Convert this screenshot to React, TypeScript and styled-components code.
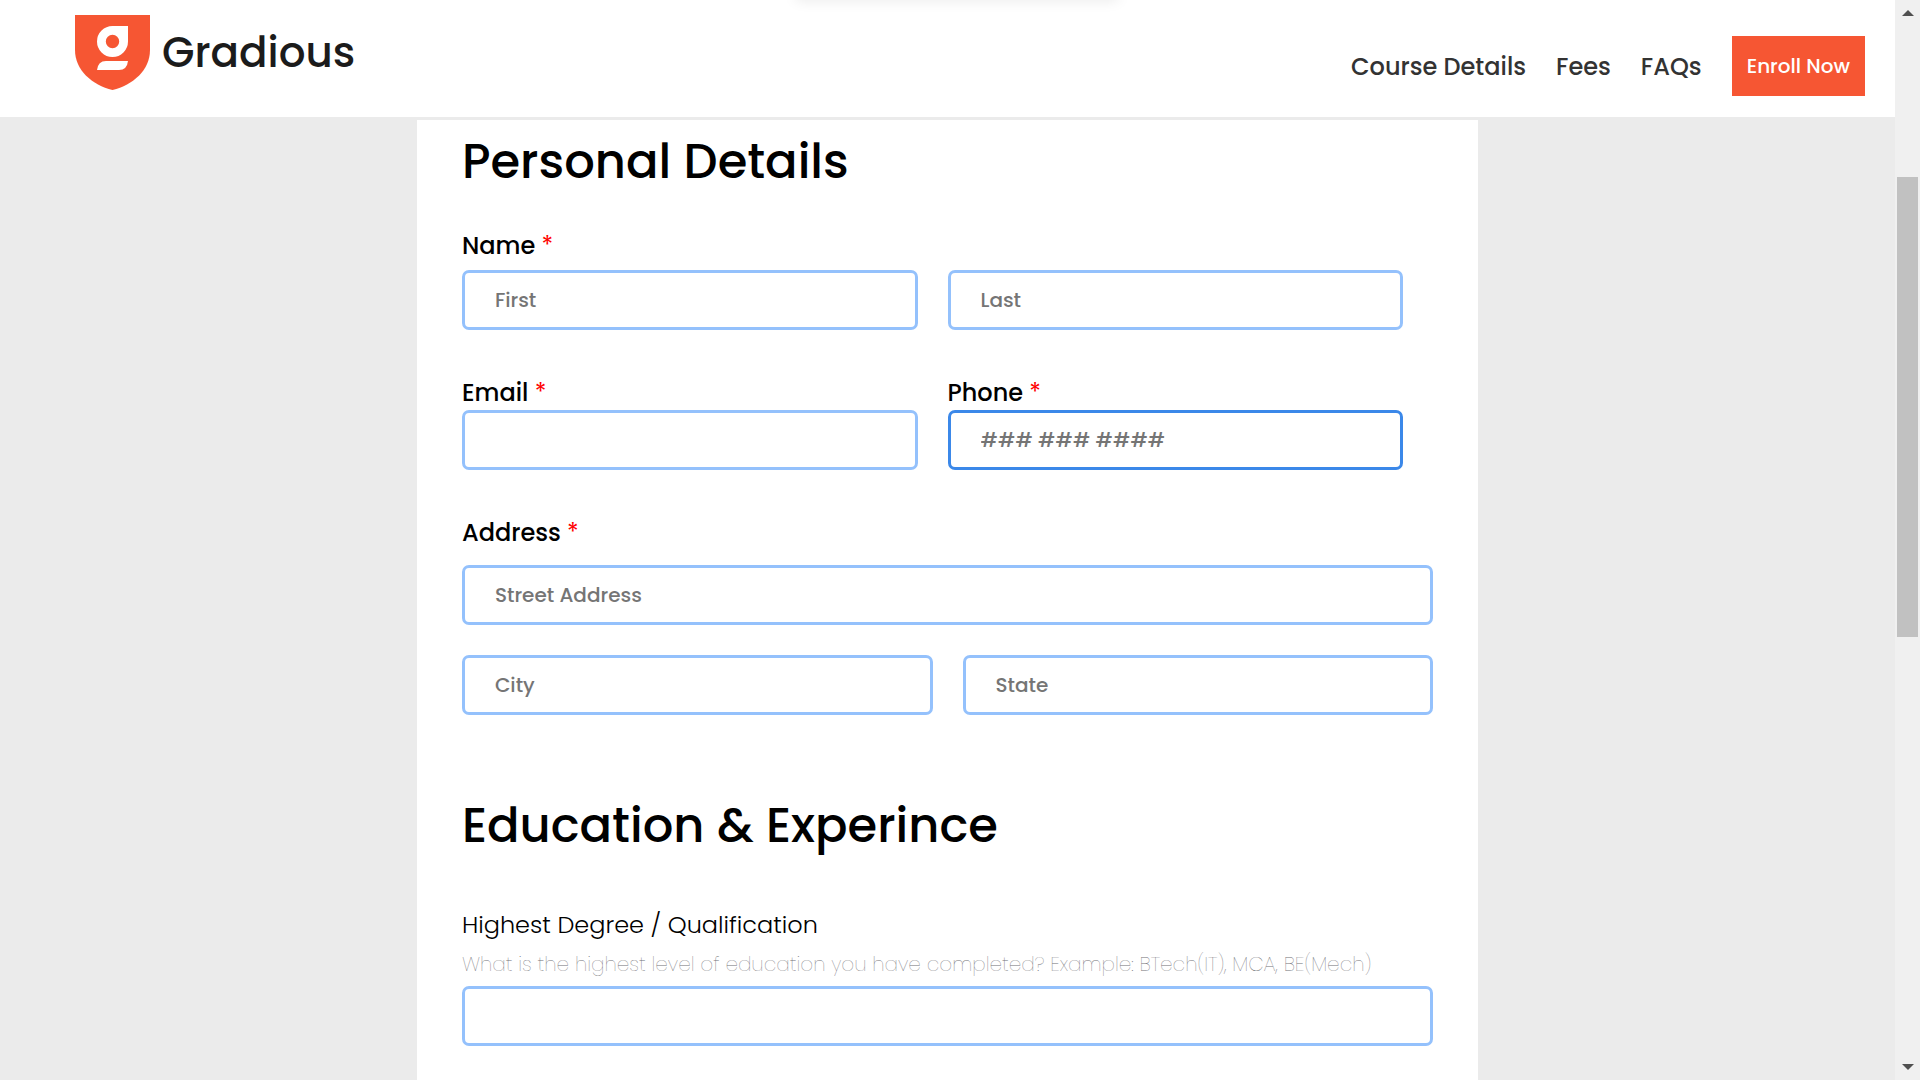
import React from "react";
import styled, { createGlobalStyle } from "styled-components";

const GlobalStyle = createGlobalStyle`
  *, *::before, *::after { box-sizing: border-box; }
  body {
    margin: 0;
    overflow: hidden;
    background: #ebebeb;
    color: #000;
    font-family: Poppins, Inter, "Liberation Sans", sans-serif;
  }
`;

const Window = styled.div`
  display: flex;
  height: 100vh;
  overflow: hidden;
`;

const Page = styled.div`
  flex: 1;
  min-width: 0;
  display: flex;
  flex-direction: column;
`;

const Header = styled.header`
  position: relative;
  flex: none;
  overflow: hidden;
  display: flex;
  align-items: flex-start;
  justify-content: space-between;
  padding: 15px 30px 21px 75px;
  background: #fff;

  &::before {
    content: "";
    position: absolute;
    top: -12px;
    left: 42%;
    width: 17%;
    height: 10px;
    box-shadow: 0 2px 14px rgba(0, 0, 0, 0.1);
  }
`;

const Brand = styled.a`
  display: flex;
  align-items: center;
  gap: 12px;
  color: #1b1b1b;
  font-size: 42px;
  font-weight: 500;
  line-height: 75px;
  text-decoration: none;
`;

const Nav = styled.nav`
  display: flex;
  align-items: center;
  gap: 30px;
  padding-top: 21px;
`;

const NavLink = styled.a`
  padding-top: 2px;
  color: #333;
  font-size: 24px;
  font-weight: 500;
  line-height: 36px;
  text-decoration: none;
`;

const EnrollButton = styled.button`
  height: 60px;
  padding: 0 15px;
  border: 0;
  background: #f65633;
  color: #fff;
  font: inherit;
  font-size: 20px;
  font-weight: 500;
`;

const Main = styled.main`
  flex: 1;
  min-height: 0;
  display: flex;
  justify-content: center;
  padding-top: 3px;
`;

const Form = styled.form`
  width: 56%;
  padding: 6px 45px 0;
  background: #fff;
`;

const Section = styled.section`
  & + & {
    margin-top: 75px;
  }
`;

const Heading = styled.h2<{ $gap: number }>`
  margin: 0 0 ${(p) => p.$gap}px;
  font-size: 48px;
  font-weight: 500;
  line-height: 72px;
`;

const Group = styled.fieldset<{ $gap?: number }>`
  display: flex;
  flex-direction: column;
  gap: ${(p) => p.$gap ?? 0}px;
  min-width: 0;
  margin: 0;
  padding: 0;
  border: 0;

  & + & {
    margin-top: 45px;
  }
`;

const Label = styled.label<{ $light?: boolean }>`
  font-size: 24px;
  font-weight: ${(p) => (p.$light ? 300 : 500)};
  line-height: 36px;
`;

const Required = styled.span`
  color: #f00;
  font-weight: 400;
`;

const Hint = styled.p`
  margin: 0;
  color: #707075;
  font-size: 20px;
  font-weight: 200;
  line-height: 31px;
`;

const Columns = styled.div<{ $inset?: boolean }>`
  display: grid;
  grid-template-columns: 1fr 1fr;
  gap: 30px;
  padding-right: ${(p) => (p.$inset ? 30 : 0)}px;
`;

const Stack = styled.div`
  display: grid;
  gap: 30px;
`;

const Field = styled.div`
  display: flex;
  flex-direction: column;

  label {
    height: 35px;
  }
`;

const Input = styled.input<{ $active?: boolean }>`
  width: 100%;
  height: 60px;
  padding: 0 30px;
  border: 3px solid ${(p) => (p.$active ? "#3b88e9" : "#94c1fc")};
  border-radius: 7px;
  outline: 0;
  background: #fff;
  color: #000;
  font: inherit;
  font-size: 20px;
  font-weight: 500;

  &::placeholder {
    color: #757575;
    opacity: 1;
  }
`;

const ScrollBar = styled.div`
  flex: none;
  display: grid;
  grid-template-rows: 26px 151fr 460fr 417fr 26px;
  justify-items: center;
  align-items: center;
  width: 25px;
  background: #f0f0f0;
`;

const Thumb = styled.div`
  grid-row: 3;
  width: 21px;
  height: 100%;
  background: #c1c1c1;
`;

const Arrow = styled.svg<{ $down?: boolean }>`
  grid-row: ${(p) => (p.$down ? 5 : 1)};
  transform: ${(p) => (p.$down ? "rotate(180deg)" : "none")};
`;

function Logo() {
  return (
    <svg width="75" height="75" viewBox="0 0 75 75" aria-hidden="true">
      <path d="M0 0H75V35C75 55 58 70 37.500 75C17 70 0 55 0 35Z" fill="#f65633" />
      <path
        fill="#fff"
        fillRule="evenodd"
        d="M37.500 11H53V26.500A15.500 15.500 0 1 1 37.500 11ZM37.500 19.800A6.700 6.700 0 1 0 37.500 33.200A6.700 6.700 0 1 0 37.500 19.800Z"
      />
      <path d="M31 46H53Q52 55 44 55H22Q23 46 31 46Z" fill="#fff" />
    </svg>
  );
}

function ArrowIcon({ down }: { down?: boolean }) {
  return (
    <Arrow $down={down} width="12" height="6" viewBox="0 0 12 6" aria-hidden="true">
      <path d="M6 0L12 6H0Z" fill="#505050" />
    </Arrow>
  );
}

function FieldLabel({ id, children }: { id: string; children: React.ReactNode }) {
  return (
    <Label htmlFor={id}>
      {children} <Required>*</Required>
    </Label>
  );
}

export default function App() {
  return (
    <Window>
      <GlobalStyle />
      <Page>
        <Header>
          <Brand href="#">
            <Logo />
            Gradious
          </Brand>
          <Nav>
            <NavLink href="#course">Course Details</NavLink>
            <NavLink href="#fees">Fees</NavLink>
            <NavLink href="#faqs">FAQs</NavLink>
            <EnrollButton type="button">Enroll Now</EnrollButton>
          </Nav>
        </Header>
        <Main>
          <Form>
            <Section>
              <Heading $gap={30}>Personal Details</Heading>
              <Group $gap={6}>
                <FieldLabel id="first">Name</FieldLabel>
                <Columns $inset>
                  <Input id="first" placeholder="First" />
                  <Input aria-label="Last name" placeholder="Last" />
                </Columns>
              </Group>
              <Group>
                <Columns $inset>
                  <Field>
                    <FieldLabel id="email">Email</FieldLabel>
                    <Input id="email" type="email" />
                  </Field>
                  <Field>
                    <FieldLabel id="phone">Phone</FieldLabel>
                    <Input id="phone" type="tel" placeholder="### ### ####" $active />
                  </Field>
                </Columns>
              </Group>
              <Group $gap={14}>
                <FieldLabel id="street">Address</FieldLabel>
                <Stack>
                  <Input id="street" placeholder="Street Address" />
                  <Columns>
                    <Input aria-label="City" placeholder="City" />
                    <Input aria-label="State" placeholder="State" />
                  </Columns>
                </Stack>
              </Group>
            </Section>
            <Section>
              <Heading $gap={45}>Education &amp; Experince</Heading>
              <Group $gap={6}>
                <Label htmlFor="degree" $light>
                  Highest Degree / Qualification
                </Label>
                <Hint id="degree-hint">
                  What is the highest level of education you have completed? Example: BTech(IT), MCA, BE(Mech)
                </Hint>
                <Input id="degree" aria-describedby="degree-hint" />
              </Group>
            </Section>
          </Form>
        </Main>
      </Page>
      <ScrollBar aria-hidden="true">
        <ArrowIcon />
        <Thumb />
        <ArrowIcon down />
      </ScrollBar>
    </Window>
  );
}
